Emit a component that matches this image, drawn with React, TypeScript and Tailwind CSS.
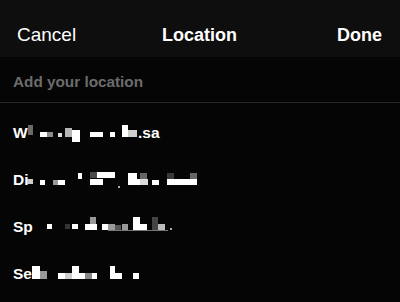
import React from "react";

type Cell = [number, number, number, number, string];

type Row = {
  prefix: string;
  prefixW: number;
  cap: number;
  end: number;
  suffix?: string;
  cells: Cell[];
};

const rows: Row[] = [
  {
    prefix: "Wi",
    prefixW: 15,
    cap: 127,
    end: 138,
    suffix: ".sa",
    cells: [
      [28, 124, 6, 14, "#050505"],
      [28, 125, 5, 10, "#6a6a6a"],
      [40, 132, 7, 5, "#ffffff"],
      [47, 132, 6, 5, "#8a8a8a"],
      [58, 133, 4, 4, "#dddddd"],
      [65, 128, 7, 9, "#b5b5b5"],
      [72, 130, 8, 12, "#ffffff"],
      [90, 132, 13, 5, "#ffffff"],
      [110, 132, 5, 5, "#ffffff"],
      [122, 125, 6, 12, "#ffffff"],
      [128, 130, 9, 7, "#cfcfcf"],
    ],
  },
  {
    prefix: "Di",
    prefixW: 14,
    cap: 175,
    end: 197,
    cells: [
      [27, 180, 6, 5, "#cccccc"],
      [40, 181, 5, 5, "#ffffff"],
      [53, 181, 5, 5, "#9a9a9a"],
      [58, 181, 7, 5, "#ffffff"],
      [78, 174, 4, 6, "#ffffff"],
      [90, 173, 7, 6, "#4a4a4a"],
      [97, 173, 18, 6, "#ffffff"],
      [90, 180, 13, 6, "#ffffff"],
      [118, 187, 2, 2, "#aaaaaa"],
      [128, 174, 9, 6, "#ffffff"],
      [128, 180, 12, 6, "#ffffff"],
      [140, 174, 7, 6, "#666666"],
      [140, 180, 8, 6, "#dddddd"],
      [152, 181, 7, 5, "#ffffff"],
      [167, 174, 7, 6, "#3a3a3a"],
      [167, 180, 30, 6, "#ffffff"],
      [190, 174, 7, 6, "#666666"],
    ],
  },
  {
    prefix: "Sp",
    prefixW: 20,
    cap: 222,
    end: 175,
    cells: [
      [47, 225, 5, 5, "#ffffff"],
      [65, 225, 5, 5, "#333333"],
      [72, 225, 6, 5, "#ffffff"],
      [85, 225, 7, 6, "#ffffff"],
      [90, 218, 6, 7, "#999999"],
      [92, 225, 5, 6, "#ffffff"],
      [102, 225, 7, 6, "#ffffff"],
      [108, 225, 7, 6, "#999999"],
      [115, 226, 6, 5, "#555555"],
      [122, 225, 6, 6, "#999999"],
      [108, 231, 60, 1, "#777777"],
      [133, 218, 7, 13, "#ffffff"],
      [140, 225, 7, 6, "#ffffff"],
      [152, 218, 6, 13, "#444444"],
      [158, 225, 7, 6, "#bbbbbb"],
      [170, 229, 2, 2, "#aaaaaa"],
    ],
  },
  {
    prefix: "Se",
    prefixW: 19,
    cap: 268,
    end: 140,
    cells: [
      [32, 266, 8, 13, "#ffffff"],
      [40, 271, 7, 8, "#9a9a9a"],
      [58, 273, 7, 6, "#ffffff"],
      [65, 273, 7, 6, "#cccccc"],
      [72, 266, 7, 13, "#ffffff"],
      [79, 273, 6, 6, "#ffffff"],
      [85, 273, 7, 6, "#888888"],
      [92, 273, 5, 6, "#ffffff"],
      [110, 266, 5, 13, "#ffffff"],
      [115, 273, 7, 6, "#ffffff"],
      [133, 273, 6, 6, "#ffffff"],
    ],
  },
];

function Mosaic({ row }: { row: Row }) {
  const start = 13 + row.prefixW;
  const width = row.end - start;
  return (
    <svg width={width} height={20} className="block shrink-0 overflow-visible relative">
      {row.cells.map((c, i) => (
        <rect
          key={i}
          x={c[0] - start}
          y={c[1] - row.cap + 4}
          width={c[2]}
          height={c[3]}
          fill={c[4]}
        />
      ))}
    </svg>
  );
}

export default function App() {
  return (
    <div
      className="w-[400px] h-[302px] bg-[#050505] overflow-hidden text-white"
      style={{ fontFamily: '"Liberation Sans", Arial, sans-serif' }}
    >
      <div className="h-[57px] bg-[#0e0e0e] flex items-center pl-[17px] pr-[18px] pt-[12px] leading-[22px]">
        <span className="flex-1 text-[19px]">Cancel</span>
        <span className="font-bold text-[18px]">Location</span>
        <span className="flex-1 text-right font-bold text-[18px]">Done</span>
      </div>
      <div className="h-[46px] border-b border-[#262626] pl-[13px] pt-[15px]">
        <span className="block text-[15.3px] leading-[20px] font-bold text-[#6c6c6c]">
          Add your location
        </span>
      </div>
      <div className="flex flex-col gap-[27px] pt-[20px] pl-[13px]">
        {rows.map((row, i) => (
          <div key={i} className="flex items-start h-[20px] text-[15.5px] leading-[20px] font-bold">
            <span
              className="block whitespace-nowrap shrink-0"
              style={{ width: row.prefixW }}
            >
              {row.prefix}
            </span>
            <Mosaic row={row} />
            {row.suffix && <span className="whitespace-nowrap">{row.suffix}</span>}
          </div>
        ))}
      </div>
    </div>
  );
}
